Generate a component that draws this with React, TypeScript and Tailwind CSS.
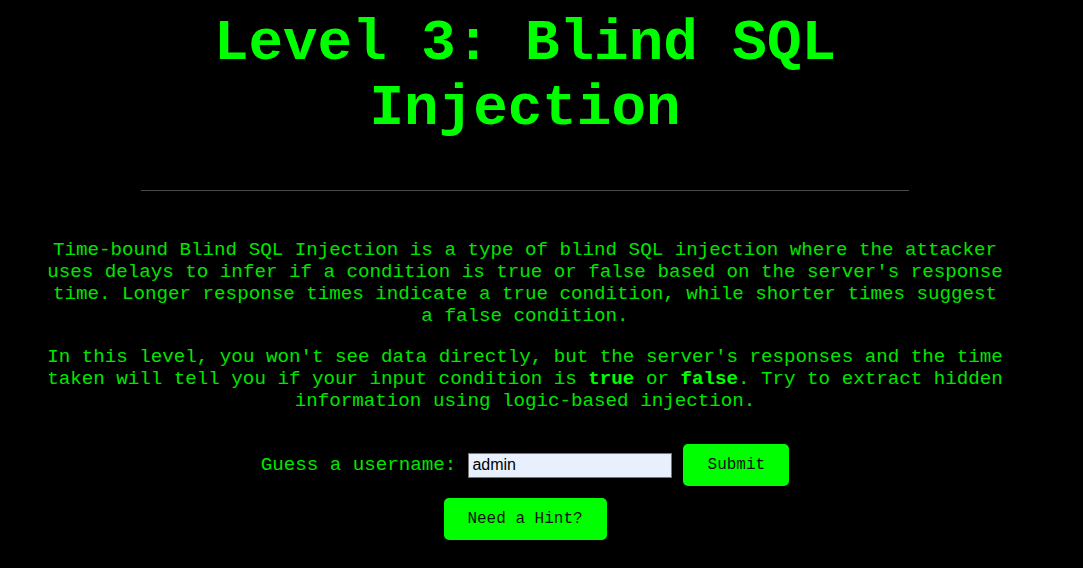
import React from "react";

export default function App() {
  return (
    <div
      className="min-h-[568px] w-full bg-black text-[#00e600]"
      style={{ fontFamily: '"Liberation Mono", "Courier New", monospace' }}
    >
      <div className="pl-[45px]">
        <div className="w-[960px] text-center">
          <h1 className="pt-[11px] text-[57.6px] font-bold leading-[65px] text-[#00ff00]">
            Level 3: Blind SQL Injection
          </h1>
          <hr className="mx-auto mt-[49px] w-[768px] border-0 border-t border-[#4a4a4a]" />
          <p className="mt-[48px] text-[19.2px] leading-[22px]">
            Time-bound Blind SQL Injection is a type of blind SQL injection where the attacker uses
            delays to infer if a condition is true or false based on the server's response time.
            Longer response times indicate a true condition, while shorter times suggest a false
            condition.
          </p>
          <p className="mt-[19px] text-[19.2px] leading-[22px]">
            In this level, you won't see data directly, but the server's responses and the time taken
            will tell you if your input condition is{" "}
            <strong className="font-bold text-[#00ff00]">true</strong> or{" "}
            <strong className="font-bold text-[#00ff00]">false</strong>. Try to extract hidden
            information using logic-based injection.
          </p>
          <form
            className="mt-[32px] flex flex-col items-center gap-[12px]"
            onSubmit={(e) => e.preventDefault()}
          >
            <div className="flex items-center justify-center">
              <label className="text-[19.2px]">Guess a username:</label>
              <input
                type="text"
                defaultValue="admin"
                className="ml-[12px] h-[25px] w-[204px] border border-[#767676] bg-[#e8f0fe] px-[3px] text-[16px] text-black outline-none"
                style={{ fontFamily: '"Liberation Sans", Arial, sans-serif' }}
              />
              <button
                type="submit"
                className="ml-[11px] h-[42px] w-[106px] rounded-[5px] bg-[#00ff00] text-[16px] text-[#111]"
              >
                Submit
              </button>
            </div>
            <button
              type="button"
              className="h-[42px] w-[163px] rounded-[5px] bg-[#00ff00] text-[16px] text-[#111]"
            >
              Need a Hint?
            </button>
          </form>
        </div>
      </div>
    </div>
  );
}
